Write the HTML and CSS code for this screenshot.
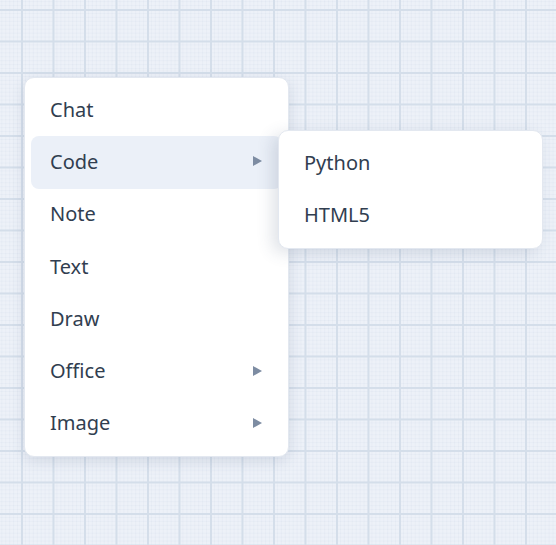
FILE: index.html
```html
<!DOCTYPE html>
<html lang="en">
<head>
    <meta charset="UTF-8">
    <meta name="viewport" content="width=device-width, initial-scale=1.0">
    <title>New Item Menu</title>
    <link rel="stylesheet" href="styles.css">
</head>
<body>
    <div class="canvas">
        <ul class="menu main-menu">
            <li class="menu-item">Chat</li>
            <li class="menu-item active">Code <span class="arrow"></span></li>
            <li class="menu-item">Note</li>
            <li class="menu-item">Text</li>
            <li class="menu-item">Draw</li>
            <li class="menu-item">Office <span class="arrow"></span></li>
            <li class="menu-item">Image <span class="arrow"></span></li>
        </ul>
        <ul class="menu sub-menu">
            <li class="menu-item">Python</li>
            <li class="menu-item">HTML5</li>
        </ul>
    </div>
</body>
</html>
```

FILE: styles.css
```css
/* Reset margins and padding */
* {
    margin: 0;
    padding: 0;
    box-sizing: border-box;
}

body {
    font-family: "Noto Sans", "Open Sans", sans-serif;
    width: 556px;
    height: 545px;
    overflow: hidden;
}

/* Graph paper canvas */
.canvas {
    position: relative;
    width: 556px;
    height: 545px;
    background-color: #edf1f8;
    background-image:
        linear-gradient(to right, #d4deea 2px, transparent 2px),
        linear-gradient(to bottom, #d4deea 2px, transparent 2px),
        linear-gradient(to right, rgba(205, 216, 230, 0.18) 1px, transparent 1px),
        linear-gradient(to bottom, rgba(205, 216, 230, 0.18) 1px, transparent 1px);
    background-size: 31.5px 31.5px, 31.5px 31.5px, 3.94px 3.94px, 3.94px 3.94px;
    background-position: 21px 9px, 21px 9px, 21px 9px, 21px 9px;
}

.menu {
    position: absolute;
    list-style: none;
    width: 265px;
    padding: 6px;
    background: #ffffff;
    border: 1px solid #e3e8f0;
    border-radius: 10px;
    box-shadow: 0 4px 14px rgba(60, 80, 110, 0.14);
}

.main-menu {
    left: 24px;
    top: 77px;
}

.sub-menu {
    left: 278px;
    top: 130px;
    box-shadow: -6px 4px 16px rgba(60, 80, 110, 0.16);
}

.menu-item {
    display: flex;
    align-items: center;
    justify-content: space-between;
    height: 52.3px;
    padding: 0 20px 2px 19px;
    border-radius: 8px;
    font-size: 20px;
    color: #313e50;
}

.menu-item.active {
    background-color: #ebf0f8;
}

.arrow {
    width: 0;
    height: 0;
    border-top: 5px solid transparent;
    border-bottom: 5px solid transparent;
    border-left: 9px solid #7d8ca2;
}
```
